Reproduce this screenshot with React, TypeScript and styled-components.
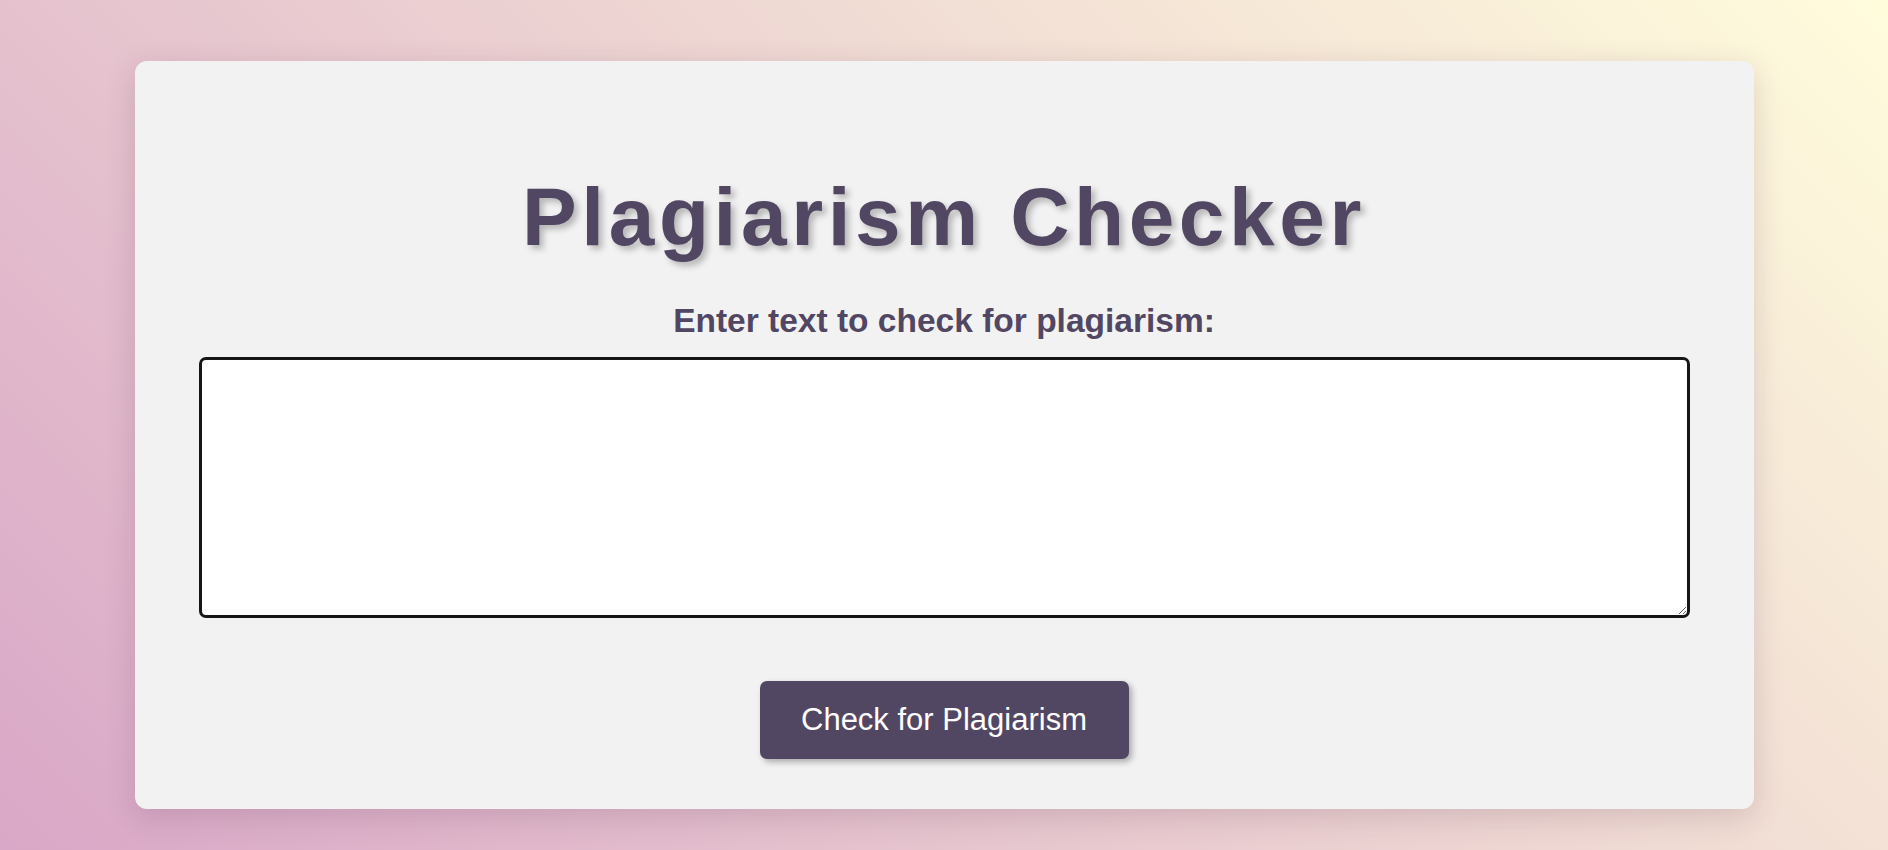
import { useState } from 'react';
import styled, { createGlobalStyle } from 'styled-components';

const GlobalStyle = createGlobalStyle`
	html, body {
		margin: 0;
		padding: 0;
	}
	body {
		min-height: 100vh;
		font-family: 'Liberation Sans', Arial, sans-serif;
		background: linear-gradient(45deg, #d9a7c7, #fffcdc);
		background-attachment: fixed;
	}
`;

const PlagiarismChecker = () => {
	const [text, setText] = useState<string>('');

	return (
		<>
			<GlobalStyle />
			<Page>
				<Card>
					<Title>Plagiarism Checker</Title>
					<Label htmlFor='input-text'>Enter text to check for plagiarism:</Label>
					<TextArea id='input-text' value={text} onChange={(e) => setText(e.target.value)} />
					<Actions>
						<CheckButton type='button'>Check for Plagiarism</CheckButton>
					</Actions>
				</Card>
			</Page>
		</>
	);
};

const Page = styled.main`
	display: flex;
	justify-content: center;
	padding: 61px 0 39px;
`;

const Card = styled.section`
	box-sizing: border-box;
	width: 1619px;
	padding: 64px 64px 50px;
	background: #f2f2f2;
	border-radius: 12px;
	box-shadow: 0 8px 30px rgba(80, 40, 70, 0.18);
`;

const Title = styled.h1`
	margin: 45px 0 38px;
	text-align: center;
	font-size: 82px;
	font-weight: 700;
	letter-spacing: 4.6px;
	color: #524763;
	text-shadow: 4px 4px 6px rgba(0, 0, 0, 0.25);
`;

const Label = styled.label`
	display: block;
	margin-bottom: 17px;
	text-align: center;
	font-size: 33.5px;
	font-weight: 700;
	color: #524763;
`;

const TextArea = styled.textarea`
	display: block;
	box-sizing: border-box;
	width: 100%;
	height: 261px;
	padding: 10px;
	border: 3px solid #161616;
	border-radius: 7px;
	background: #fff;
	font-family: 'Liberation Sans', Arial, sans-serif;
	font-size: 20px;
	resize: vertical;
	outline: none;
`;

const Actions = styled.div`
	display: flex;
	justify-content: center;
	margin-top: 63px;
`;

const CheckButton = styled.button`
	width: 369px;
	height: 78px;
	border: none;
	border-radius: 7px;
	background: #524763;
	color: #fff;
	font-family: 'Liberation Sans', Arial, sans-serif;
	font-size: 31px;
	cursor: pointer;
	box-shadow: 3px 3px 6px rgba(0, 0, 0, 0.3);
`;

export default PlagiarismChecker;
